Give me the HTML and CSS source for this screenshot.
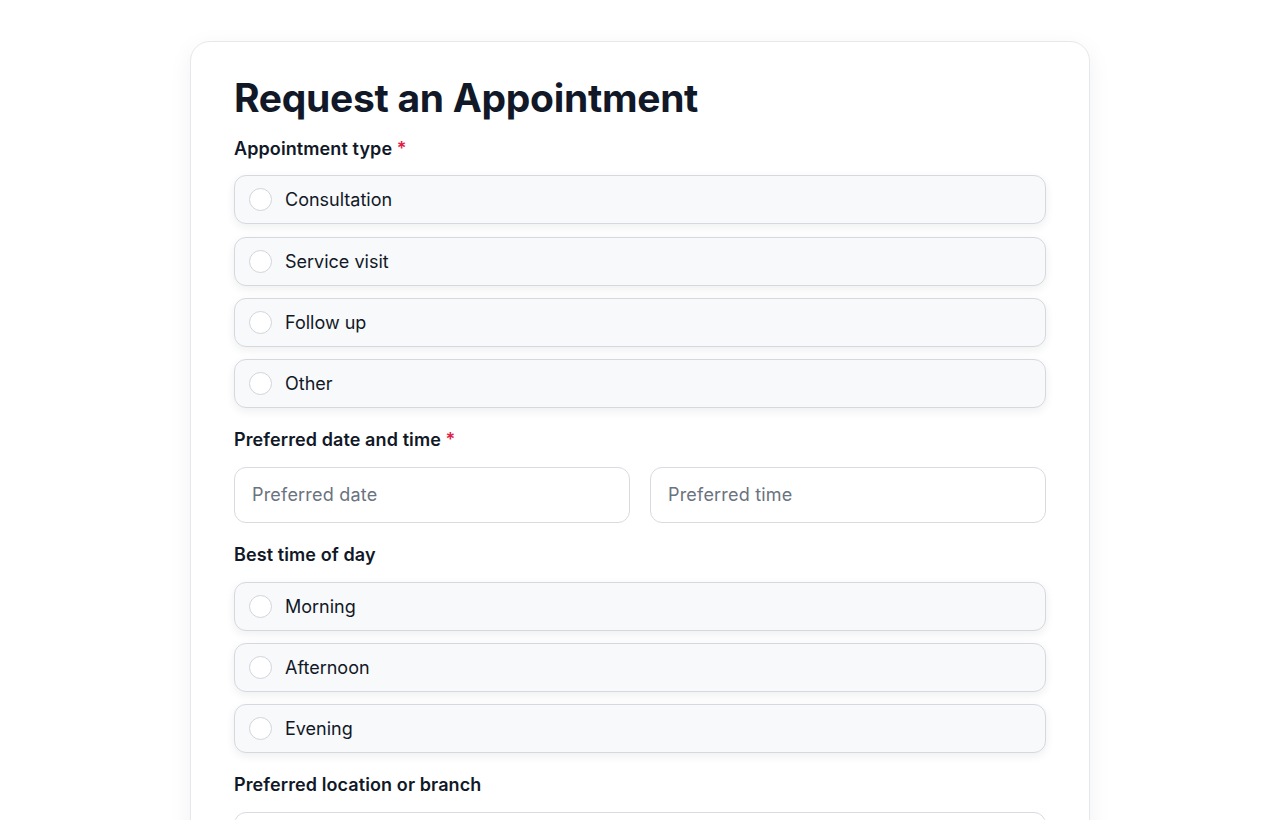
FILE: index.html
```html
<!DOCTYPE html>
<html lang="en">
<head>
    <meta charset="UTF-8">
    <meta name="viewport" content="width=device-width, initial-scale=1.0">
    <title>Request an Appointment</title>
    <link rel="stylesheet" href="styles.css">
</head>
<body>

    <form class="card">
        <h1>Request an Appointment</h1>

        <div class="group">
            <label class="label">Appointment type <span class="req">*</span></label>
            <div class="options">
                <label class="option"><input type="radio" name="type"><span class="dot"></span>Consultation</label>
                <label class="option"><input type="radio" name="type"><span class="dot"></span>Service visit</label>
                <label class="option"><input type="radio" name="type"><span class="dot"></span>Follow up</label>
                <label class="option"><input type="radio" name="type"><span class="dot"></span>Other</label>
            </div>
        </div>

        <div class="group">
            <label class="label">Preferred date and time <span class="req">*</span></label>
            <div class="row">
                <input class="field" type="text" placeholder="Preferred date">
                <input class="field" type="text" placeholder="Preferred time">
            </div>
        </div>

        <div class="group">
            <label class="label">Best time of day</label>
            <div class="options">
                <label class="option"><input type="radio" name="tod"><span class="dot"></span>Morning</label>
                <label class="option"><input type="radio" name="tod"><span class="dot"></span>Afternoon</label>
                <label class="option"><input type="radio" name="tod"><span class="dot"></span>Evening</label>
            </div>
        </div>

        <div class="group">
            <label class="label">Preferred location or branch</label>
            <input class="field" type="text" placeholder="Location or branch">
        </div>
    </form>

</body>
</html>
```

FILE: styles.css
```css
* {
    margin: 0;
    padding: 0;
    box-sizing: border-box;
}

body {
    background: #fff;
    font-family: Inter, "Noto Sans", sans-serif;
    color: #111827;
    padding-top: 41px;
}

.card {
    width: 900px;
    margin: 0 auto;
    padding: 32px 43px 40px;
    background: #fff;
    border: 1px solid #e7e8ec;
    border-radius: 20px;
    box-shadow: 0 6px 24px rgba(17, 24, 39, 0.06);
    display: flex;
    flex-direction: column;
    gap: 20px;
}

h1 {
    font-size: 39px;
    line-height: 48px;
    font-weight: 700;
    letter-spacing: -0.3px;
    color: #111827;
    margin-bottom: -5.4px;
}

.group {
    display: flex;
    flex-direction: column;
    gap: 14.6px;
}

.label {
    font-size: 18px;
    line-height: 24px;
    font-weight: 600;
    letter-spacing: 0.1px;
    color: #111827;
}

.req {
    color: #e11d48;
}

.options {
    display: flex;
    flex-direction: column;
    gap: 12.4px;
}

.option {
    display: flex;
    align-items: center;
    gap: 13px;
    height: 49px;
    padding: 0 14px;
    background: #f8f9fb;
    border: 1px solid #d6d8df;
    border-radius: 12px;
    box-shadow: 0 3px 10px rgba(17, 24, 39, 0.07);
    font-size: 18px;
    color: #111827;
    cursor: pointer;
}

.option input {
    display: none;
}

.dot {
    width: 23px;
    height: 23px;
    border: 1px solid #d1d5db;
    border-radius: 50%;
    background: #fff;
    flex-shrink: 0;
}

.row {
    display: flex;
    gap: 20px;
}

.row .field {
    flex: 1;
}

.field {
    width: 100%;
    height: 56px;
    padding: 0 17px;
    border: 1px solid #d9dbe1;
    border-radius: 12px;
    background: #fff;
    font-family: inherit;
    font-size: 18px;
    letter-spacing: 0.2px;
    color: #111827;
}

.field::placeholder {
    color: #6b7280;
}
```
